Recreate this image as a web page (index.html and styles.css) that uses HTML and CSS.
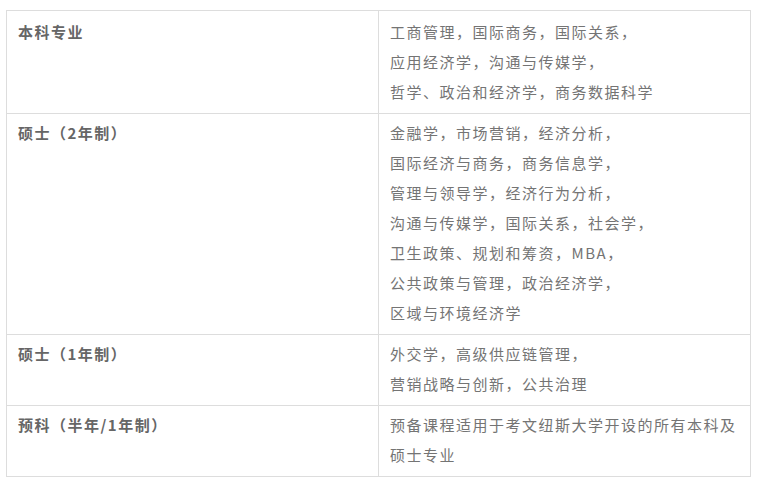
FILE: index.html
```html
<!DOCTYPE html>
<html lang="zh-CN">
<head>
<meta charset="utf-8">
<link rel="stylesheet" href="styles.css">
</head>
<body>
<table class="programs">
  <tr class="first">
    <td class="label">本科专业</td>
    <td class="list">工商管理，国际商务，国际关系，<br>应用经济学，沟通与传媒学，<br>哲学、政治和经济学，商务数据科学</td>
  </tr>
  <tr>
    <td class="label">硕士（2年制）</td>
    <td class="list">金融学，市场营销，经济分析，<br>国际经济与商务，商务信息学，<br>管理与领导学，经济行为分析，<br>沟通与传媒学，国际关系，社会学，<br>卫生政策、规划和筹资，MBA，<br>公共政策与管理，政治经济学，<br>区域与环境经济学</td>
  </tr>
  <tr>
    <td class="label">硕士（1年制）</td>
    <td class="list">外交学，高级供应链管理，<br>营销战略与创新，公共治理</td>
  </tr>
  <tr>
    <td class="label">预科（半年/1年制）</td>
    <td class="list">预备课程适用于考文纽斯大学开设的所有本科及硕士专业</td>
  </tr>
</table>
</body>
</html>
```

FILE: styles.css
```css
html, body {
  margin: 0;
  padding: 0;
  background: #fff;
}
body {
  padding: 10px 7px 0 6px;
  font-family: "Noto Sans CJK SC", "Noto Sans", sans-serif;
  font-size: 15px;
  letter-spacing: 1.5px;
  line-height: 30px;
  color: #666;
}
.programs {
  width: 745px;
  border-collapse: collapse;
  table-layout: fixed;
}
.programs td {
  width: 50%;
  border: 1px solid #ddd;
  vertical-align: top;
  padding: 4px 10px 6px 11px;
}
.programs tr.first td {
  padding-top: 6px;
}
.label {
  font-weight: bold;
  color: #666;
}
.list {
  color: #747474;
}
```
